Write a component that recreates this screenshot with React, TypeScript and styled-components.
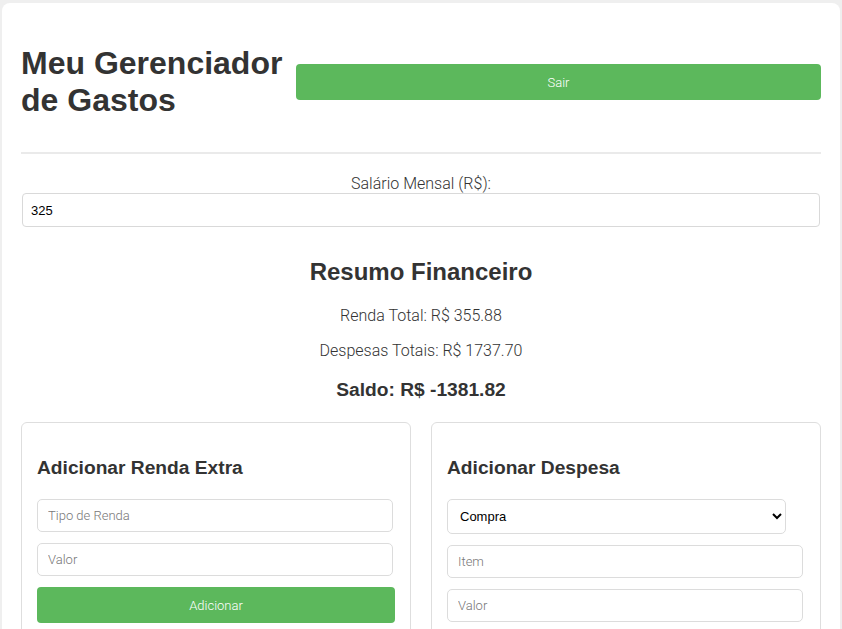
import React from "react";
import styled, { createGlobalStyle } from "styled-components";

const Global = createGlobalStyle`
  html, body { margin: 0; padding: 0; }
  body {
    background: #efefef;
    font-family: Roboto, "Liberation Sans", Arial, sans-serif;
    font-weight: 300;
    color: #333;
    font-size: 16px;
  }
  * { box-sizing: border-box; }
`;

const Container = styled.div`
  background: #fff;
  margin: 3px 2px 0 2px;
  padding: 21px 19px 10px 19px;
  border-radius: 8px;
  min-height: 640px;
`;

const Header = styled.header`
  display: flex;
  align-items: center;
  gap: 13px;
  padding-bottom: 12px;
  border-bottom: 2px solid #eaeaea;
  margin-bottom: 20px;
`;

const Title = styled.h1`
  font-family: "Liberation Sans", Arial, sans-serif;
  font-weight: 700;
  font-size: 32px;
  line-height: 37px;
  margin: 21px 0;
  width: 262px;
  flex: 0 0 262px;
  color: #333;
`;

const GreenButton = styled.button<{ $height: number }>`
  flex: 1;
  width: 100%;
  height: ${(p) => p.$height}px;
  background: #5cb85c;
  color: #fff;
  border: none;
  border-radius: 4px;
  font-family: Roboto, "Liberation Sans", Arial, sans-serif;
  font-weight: 300;
  font-size: 13px;
  cursor: pointer;
`;

const SalaryLabel = styled.label`
  display: block;
  text-align: center;
  line-height: 19px;
`;

const SalaryInput = styled.input`
  display: block;
  width: calc(100% - 2px);
  margin: 0 1px;
  height: 34px;
  padding: 0 8px;
  border: 1px solid #d9d9d9;
  border-radius: 4px;
  font-family: "Liberation Sans", Arial, sans-serif;
  font-size: 13px;
  color: #000;
`;

const Summary = styled.section`
  text-align: center;
  margin-top: 31px;
`;

const SummaryTitle = styled.h2`
  font-family: "Liberation Sans", Arial, sans-serif;
  font-weight: 700;
  font-size: 24px;
  line-height: 28px;
  margin: 0 0 20px;
`;

const SummaryLine = styled.p`
  margin: 16px 0;
  line-height: 19px;
`;

const Balance = styled.h3`
  font-family: "Liberation Sans", Arial, sans-serif;
  font-weight: 700;
  font-size: 19.2px;
  line-height: 22px;
  margin: 19px 0 21px;
`;

const Cards = styled.div`
  display: grid;
  grid-template-columns: 1fr 1fr;
  gap: 20px;
`;

const Card = styled.div`
  border: 1px solid #dedede;
  border-radius: 6px;
  padding: 15px;
`;

const CardTitle = styled.h3`
  font-family: "Liberation Sans", Arial, sans-serif;
  font-weight: 700;
  font-size: 19.2px;
  line-height: 22px;
  margin: 19px 0 20px;
`;

const Field = styled.input`
  display: block;
  width: calc(100% - 2px);
  height: 33px;
  padding: 0 10px;
  margin-bottom: 11px;
  border: 1px solid #dcdcdc;
  border-radius: 5px;
  font-family: Roboto, "Liberation Sans", Arial, sans-serif;
  font-weight: 300;
  font-size: 13px;
  color: #000;
  &::placeholder { color: #777; }
`;

const Select = styled.select`
  display: block;
  width: 94.6%;
  height: 35px;
  padding: 0 8px;
  margin-bottom: 11px;
  border: 1px solid #dcdcdc;
  border-radius: 5px;
  background: #fff;
  font-family: "Liberation Sans", Arial, sans-serif;
  font-size: 13px;
  color: #000;
`;

export default function App() {
  return (
    <>
      <Global />
      <Container>
        <Header>
          <Title>Meu Gerenciador de Gastos</Title>
          <GreenButton $height={36}>Sair</GreenButton>
        </Header>
        <SalaryLabel htmlFor="salario">Salário Mensal (R$):</SalaryLabel>
        <SalaryInput id="salario" type="number" defaultValue="325" />
        <Summary>
          <SummaryTitle>Resumo Financeiro</SummaryTitle>
          <SummaryLine>Renda Total: R$ 355.88</SummaryLine>
          <SummaryLine>Despesas Totais: R$ 1737.70</SummaryLine>
          <Balance>Saldo: R$ -1381.82</Balance>
        </Summary>
        <Cards>
          <Card>
            <CardTitle>Adicionar Renda Extra</CardTitle>
            <Field placeholder="Tipo de Renda" />
            <Field placeholder="Valor" />
            <GreenButton $height={36}>Adicionar</GreenButton>
          </Card>
          <Card>
            <CardTitle>Adicionar Despesa</CardTitle>
            <Select defaultValue="Compra">
              <option>Compra</option>
              <option>Conta</option>
              <option>Outro</option>
            </Select>
            <Field placeholder="Item" />
            <Field placeholder="Valor" />
          </Card>
        </Cards>
      </Container>
    </>
  );
}
